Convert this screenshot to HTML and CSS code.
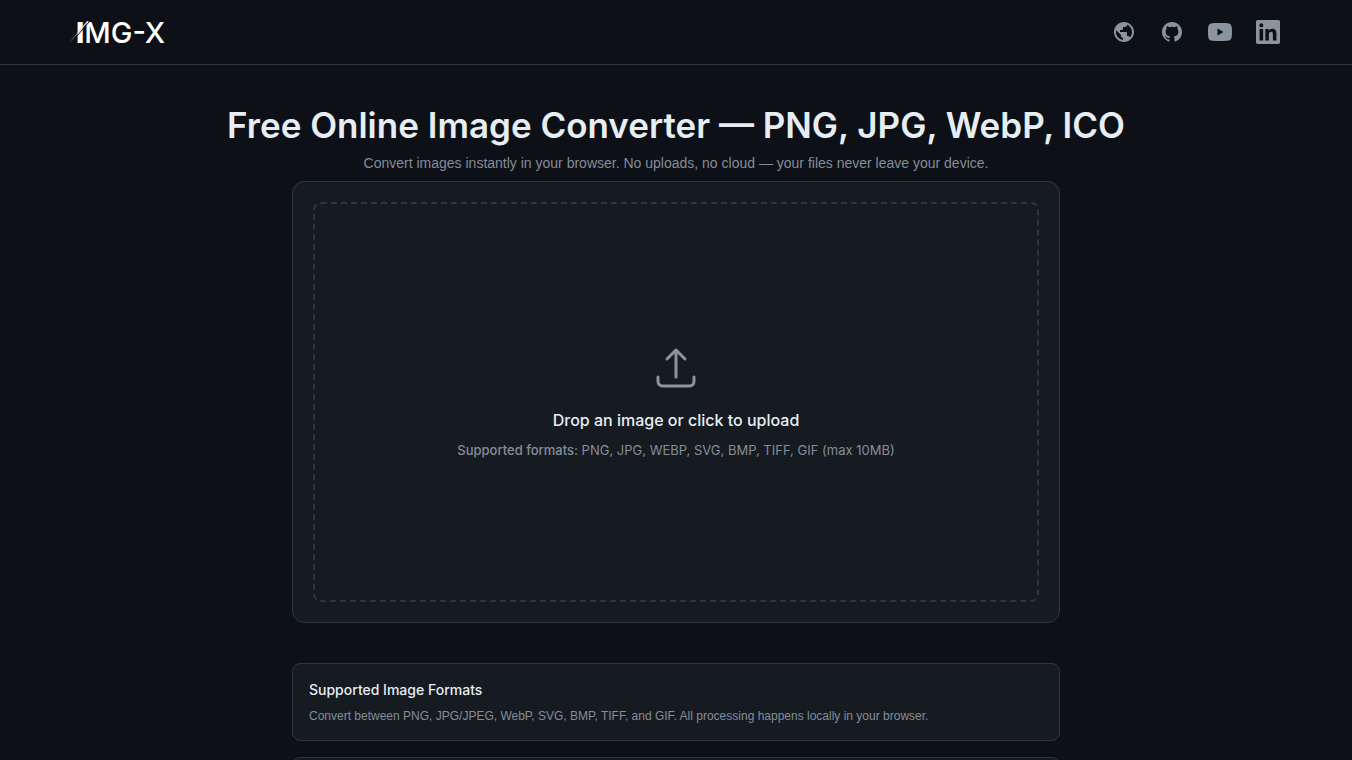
FILE: index.html
```html
<!DOCTYPE html>
<html lang="en">
<head>
    <meta charset="UTF-8">
    <meta name="viewport" content="width=device-width, initial-scale=1.0">
    <title>IMG-X</title>
    <link rel="stylesheet" href="styles.css">
</head>
<body>
    <header class="header">
        <a href="#" class="logo">
            <svg width="100" height="32" viewBox="0 0 100 32">
                <text class="logo-text" x="4" y="27"><tspan class="logo-initial">I</tspan>MG-X</text>
                <path d="M-1 27 L17 6" stroke="#0d1017" stroke-width="1"/>
                <path d="M-3 27 L15 5 L17 5 Z" fill="#c9d1d9"/>
            </svg>
        </a>
        <nav class="social-links">
            <a href="#" aria-label="Website">
                <svg viewBox="0 0 24 24"><path d="M12 2C6.48 2 2 6.48 2 12s4.48 10 10 10 10-4.48 10-10S17.52 2 12 2zm-1 17.93c-3.95-.49-7-3.85-7-7.93 0-.62.08-1.21.21-1.79L9 15v1c0 1.1.9 2 2 2v1.93zm6.9-2.54c-.26-.81-1-1.39-1.9-1.39h-1v-3c0-.55-.45-1-1-1H8v-2h2c.55 0 1-.45 1-1V7h2c1.1 0 2-.9 2-2v-.41c2.93 1.19 5 4.06 5 7.41 0 2.08-.8 3.97-2.1 5.39z"/></svg>
            </a>
            <a href="#" aria-label="GitHub">
                <svg viewBox="0 0 24 24"><path d="M12 2C6.477 2 2 6.484 2 12.017c0 4.425 2.865 8.18 6.839 9.504.5.092.682-.217.682-.483 0-.237-.008-.868-.013-1.703-2.782.605-3.369-1.343-3.369-1.343-.454-1.158-1.11-1.466-1.11-1.466-.908-.62.069-.608.069-.608 1.003.07 1.531 1.032 1.531 1.032.892 1.53 2.341 1.088 2.91.832.092-.647.35-1.088.636-1.338-2.22-.253-4.555-1.113-4.555-4.951 0-1.093.39-1.988 1.029-2.688-.103-.253-.446-1.272.098-2.65 0 0 .84-.27 2.75 1.026A9.564 9.564 0 0112 6.844c.85.004 1.705.115 2.504.337 1.909-1.296 2.747-1.027 2.747-1.027.546 1.379.202 2.398.1 2.651.64.7 1.028 1.595 1.028 2.688 0 3.848-2.339 4.695-4.566 4.943.359.309.678.92.678 1.855 0 1.338-.012 2.419-.012 2.747 0 .268.18.58.688.482A10.019 10.019 0 0022 12.017C22 6.484 17.522 2 12 2z"/></svg>
            </a>
            <a href="#" aria-label="YouTube">
                <svg viewBox="0 0 24 24"><path d="M19.615 3.184c-3.604-.246-11.631-.245-15.23 0-3.897.266-4.356 2.62-4.385 8.816.029 6.185.484 8.549 4.385 8.816 3.6.245 11.626.246 15.23 0 3.897-.266 4.356-2.62 4.385-8.816-.029-6.185-.484-8.549-4.385-8.816zM9.5 15.5v-7l6 3.5-6 3.5z"/></svg>
            </a>
            <a href="#" aria-label="LinkedIn">
                <svg viewBox="0 0 24 24"><path d="M20.447 20.452h-3.554v-5.569c0-1.328-.027-3.037-1.852-3.037-1.853 0-2.136 1.445-2.136 2.939v5.667H9.351V9h3.414v1.561h.046c.477-.9 1.637-1.85 3.37-1.85 3.601 0 4.267 2.37 4.267 5.455v6.286zM5.337 7.433a2.062 2.062 0 01-2.063-2.065 2.064 2.064 0 112.063 2.065zm1.782 13.019H3.555V9h3.564v11.452zM22.225 0H1.771C.792 0 0 .774 0 1.729v20.542C0 23.227.792 24 1.771 24h20.451C23.2 24 24 23.227 24 22.271V1.729C24 .774 23.2 0 22.222 0h.003z"/></svg>
            </a>
        </nav>
    </header>

    <main class="main">
        <h1>Free Online Image Converter — PNG, JPG, WebP, ICO</h1>
        <p class="subtitle">Convert images instantly in your browser. No uploads, no cloud — your files never leave your device.</p>

        <div class="upload-card">
            <label class="dropzone" for="file-input">
                <svg class="upload-icon" viewBox="0 0 24 24"><path d="M3 16.5v2.25A2.25 2.25 0 005.25 21h13.5A2.25 2.25 0 0021 18.75V16.5m-13.5-9L12 3m0 0l4.5 4.5M12 3v13.5"/></svg>
                <span class="dropzone-title">Drop an image or click to upload</span>
                <span class="dropzone-formats"><strong>Supported formats:</strong> PNG, JPG, WEBP, SVG, BMP, TIFF, GIF (max 10MB)</span>
                <input type="file" id="file-input" accept="image/*">
            </label>
        </div>

        <div class="info-list">
            <section class="info-card">
                <h2>Supported Image Formats</h2>
                <p>Convert between PNG, JPG/JPEG, WebP, SVG, BMP, TIFF, and GIF. All processing happens locally in your browser.</p>
            </section>
            <section class="info-card"></section>
        </div>
    </main>
</body>
</html>
```

FILE: styles.css
```css
* {
    margin: 0;
    padding: 0;
    box-sizing: border-box;
}

body {
    background-color: #0d1017;
    color: #e6edf3;
    font-family: 'Inter', 'Liberation Sans', sans-serif;
    font-size: 14px;
    line-height: 20px;
    min-height: 100vh;
}

.header {
    height: 65px;
    padding: 0 72px;
    border-bottom: 1px solid #30363d;
    display: flex;
    justify-content: space-between;
    align-items: center;
}

.logo svg {
    display: block;
    overflow: visible;
}

.logo-text {
    font-size: 29px;
    font-weight: 500;
    fill: #fff;
}

.logo-initial {
    font-weight: 800;
}

.social-links {
    display: flex;
    gap: 24px;
}

.social-links a {
    color: #8b949e;
}

.social-links a:hover {
    color: #e6edf3;
}

.social-links svg {
    display: block;
    width: 24px;
    height: 24px;
    fill: currentColor;
}

.main {
    padding: 40px 16px;
    display: flex;
    flex-direction: column;
    align-items: center;
}

h1 {
    font-size: 35px;
    font-weight: 600;
    line-height: 40px;
    text-align: center;
}

.subtitle {
    margin: 8px 0;
    text-align: center;
}

/* Muted text */
.subtitle,
.dropzone-formats,
.info-card p {
    color: #858d97;
}

.subtitle,
.info-card p {
    font-family: 'Liberation Sans', Arial, sans-serif;
}

.upload-card {
    width: 100%;
    max-width: 768px;
    padding: 20px;
    background-color: #161b22;
    border: 1px solid #30363d;
    border-radius: 12px;
}

.dropzone {
    min-height: 400px;
    border: 2px dashed #30363d;
    border-radius: 8px;
    display: flex;
    flex-direction: column;
    justify-content: center;
    align-items: center;
    text-align: center;
    cursor: pointer;
}

.dropzone:hover {
    border-color: #8b949e;
}

.dropzone input {
    display: none;
}

.upload-icon {
    width: 48px;
    height: 48px;
    margin-bottom: 16px;
    fill: none;
    stroke: #8b949e;
    stroke-width: 1.5;
    stroke-linecap: round;
    stroke-linejoin: round;
}

.dropzone-title {
    margin-bottom: 8px;
    font-size: 16px;
    font-weight: 500;
    line-height: 24px;
}

.dropzone-formats {
    font-size: 13px;
}

.dropzone-formats strong {
    font-weight: 500;
}

.info-list {
    width: 100%;
    max-width: 768px;
    margin-top: 40px;
    display: flex;
    flex-direction: column;
    gap: 16px;
}

.info-card {
    min-height: 78px;
    padding: 16px;
    background-color: #161b22;
    border: 1px solid #30363d;
    border-radius: 8px;
}

.info-card h2 {
    margin-bottom: 8px;
    font-size: 14px;
    font-weight: 500;
    line-height: 20px;
}

.info-card p {
    font-size: 12px;
    line-height: 16px;
}
```
